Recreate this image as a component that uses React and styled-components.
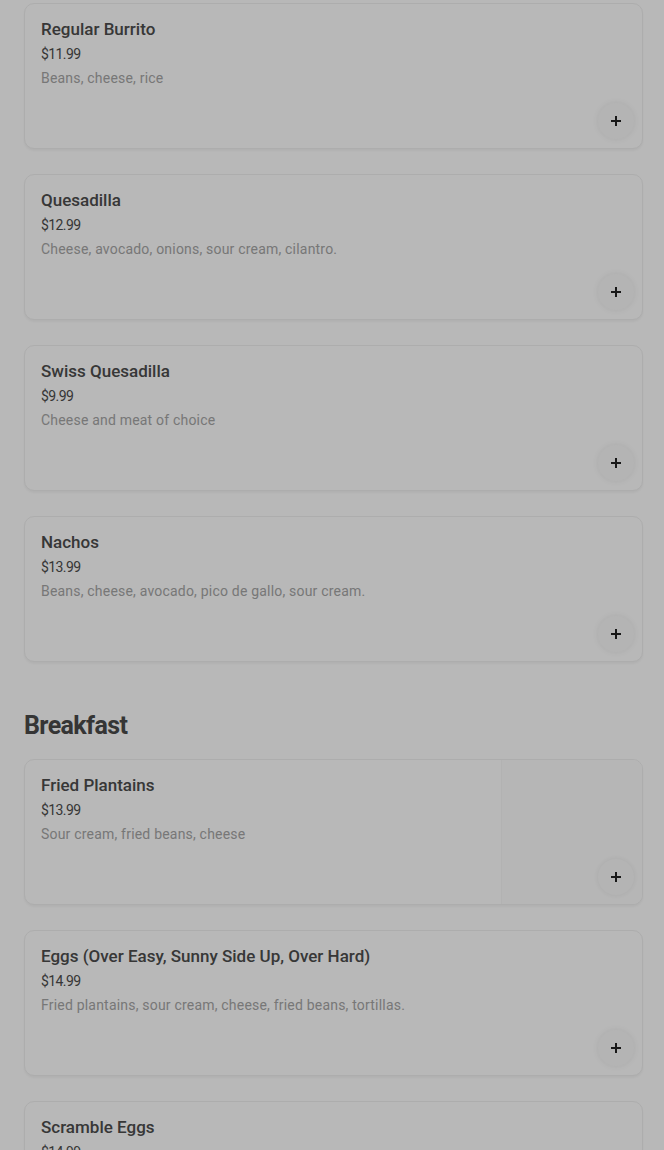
import React from 'react';
import styled, { createGlobalStyle } from 'styled-components';

const GlobalStyle = createGlobalStyle`
  html, body {
    margin: 0;
    padding: 0;
    background: #ffffff;
    font-family: Roboto, "Noto Sans", "Liberation Sans", sans-serif;
    overflow: hidden;
  }
`;

const Page = styled.div`
  padding: 3px 21px 0 24px;
  display: flex;
  flex-direction: column;
  height: 1150px;
  overflow: hidden;
`;

const Section = styled.section`
  display: flex;
  flex-direction: column;
  gap: 25px;
  margin-bottom: ${(p) => (p.$last ? '0' : '49px')};
`;

const SectionTitle = styled.h2`
  margin: 0 0 -7px;
  font-size: 25px;
  font-weight: 700;
  color: #4a4a4a;
  line-height: 30px;
  letter-spacing: -0.6px;
`;

const Card = styled.div`
  position: relative;
  display: flex;
  height: 146px;
  box-sizing: border-box;
  border: 1px solid #f0f0f0;
  border-radius: 10px;
  background: #ffffff;
  box-shadow: 0 2px 2px rgba(0, 0, 0, 0.04);
  overflow: hidden;
`;

const Info = styled.div`
  flex: 1;
  padding: 15px 16px;
  display: flex;
  flex-direction: column;
`;

const Thumb = styled.div`
  width: 140px;
  background: #fdfdfd;
  border-left: 1px solid #f7f7f7;
`;

const Name = styled.div`
  font-size: 17px;
  font-weight: 500;
  color: #4d4d4d;
  line-height: 20px;
`;

const Price = styled.div`
  margin-top: 6px;
  font-size: 14px;
  color: #4c4c4c;
  line-height: 18px;
  letter-spacing: -0.6px;
`;

const Desc = styled.div`
  margin-top: 6px;
  font-size: 14px;
  color: #a6a6a6;
  line-height: 18px;
  letter-spacing: 0.2px;
`;

const AddButton = styled.button`
  position: absolute;
  right: 8px;
  bottom: 9px;
  width: 36px;
  height: 36px;
  border-radius: 50%;
  border: none;
  background: #fafafa;
  box-shadow: 0 0 6px rgba(0, 0, 0, 0.08);
  display: flex;
  align-items: center;
  justify-content: center;
  padding: 0;
  cursor: pointer;
`;

const Overlay = styled.div`
  position: fixed;
  inset: 0;
  background: rgba(0, 0, 0, 0.28);
  pointer-events: none;
`;

const PlusIcon = () => (
  <svg width="12" height="12" viewBox="0 0 12 12">
    <path d="M6 1v10M1 6h10" stroke="#222" strokeWidth="2" />
  </svg>
);

const MenuCard = ({ item }) => (
  <Card>
    <Info>
      <Name>{item.name}</Name>
      <Price>{item.price}</Price>
      <Desc>{item.desc}</Desc>
    </Info>
    {item.thumb && <Thumb />}
    <AddButton aria-label="Add">
      <PlusIcon />
    </AddButton>
  </Card>
);

const mains = [
  { name: 'Regular Burrito', price: '$11.99', desc: 'Beans, cheese, rice' },
  { name: 'Quesadilla', price: '$12.99', desc: 'Cheese, avocado, onions, sour cream, cilantro.' },
  { name: 'Swiss Quesadilla', price: '$9.99', desc: 'Cheese and meat of choice' },
  { name: 'Nachos', price: '$13.99', desc: 'Beans, cheese, avocado, pico de gallo, sour cream.' },
];

const breakfast = [
  { name: 'Fried Plantains', price: '$13.99', desc: 'Sour cream, fried beans, cheese', thumb: true },
  { name: 'Eggs (Over Easy, Sunny Side Up, Over Hard)', price: '$14.99', desc: 'Fried plantains, sour cream, cheese, fried beans, tortillas.' },
  { name: 'Scramble Eggs', price: '$14.99', desc: 'Eggs, plantains, sour cream, cheese, beans.' },
];

export default function App() {
  return (
    <>
      <GlobalStyle />
      <Page>
        <Section>
          {mains.map((item) => (
            <MenuCard key={item.name} item={item} />
          ))}
        </Section>
        <Section $last>
          <SectionTitle>Breakfast</SectionTitle>
          {breakfast.map((item) => (
            <MenuCard key={item.name} item={item} />
          ))}
        </Section>
      </Page>
      <Overlay />
    </>
  );
}
